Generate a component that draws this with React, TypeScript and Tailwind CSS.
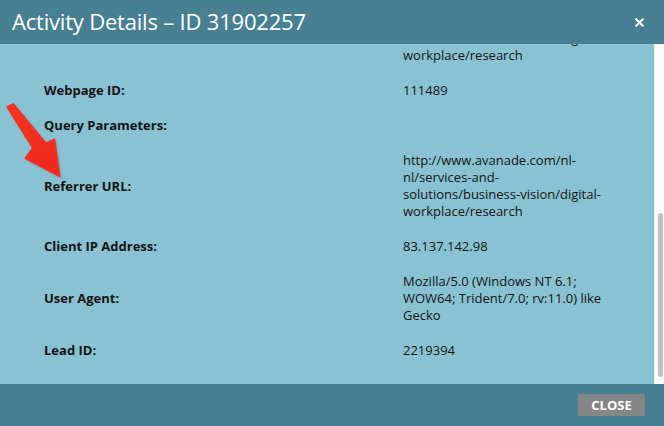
import { X } from "lucide-react";

interface Field {
  label: string;
  lines: string[];
}

const referrer = [
  "http://www.avanade.com/nl-",
  "nl/services-and-",
  "solutions/business-vision/digital-",
  "workplace/research",
];

const fields: Field[] = [
  { label: "Webpage URL:", lines: referrer },
  { label: "Webpage ID:", lines: ["111489"] },
  { label: "Query Parameters:", lines: [] },
  { label: "Referrer URL:", lines: referrer },
  { label: "Client IP Address:", lines: ["83.137.142.98"] },
  {
    label: "User Agent:",
    lines: ["Mozilla/5.0 (Windows NT 6.1;", "WOW64; Trident/7.0; rv:11.0) like", "Gecko"],
  },
  { label: "Lead ID:", lines: ["2219394"] },
];

function Arrow() {
  return (
    <svg
      className="absolute left-0 top-0 pointer-events-none"
      width="70"
      height="190"
      viewBox="0 0 70 190"
      style={{ filter: "drop-shadow(1px 1px 1px rgba(0,0,0,0.18))" }}
    >
      <defs>
        <linearGradient id="arrowFill" x1="0" y1="0" x2="0.4" y2="1">
          <stop offset="0" stopColor="#f7351f" />
          <stop offset="1" stopColor="#ee2a1c" />
        </linearGradient>
      </defs>
      <polygon
        points="7.2,63 13.3,60 46,99.2 54.5,95.3 59.8,132.5 25.2,114.3 32.8,104"
        fill="url(#arrowFill)"
        strokeLinejoin="round"
        stroke="#f5301f"
        strokeWidth="1.5"
      />
    </svg>
  );
}

export default function App() {
  return (
    <div
      className="w-[664px] h-[426px] flex flex-col bg-[#478093] overflow-hidden"
      style={{ fontFamily: "'Open Sans', 'Liberation Sans', sans-serif" }}
    >
      {/* Header */}
      <div className="h-[44px] shrink-0 flex items-center justify-between pl-[12px] pr-[18px] bg-[#478093]">
        <h1 className="text-white text-[22px] leading-[30px] -mt-[2px] tracking-[-0.2px]">
          Activity Details – ID 31902257
        </h1>
        <X size={13} strokeWidth={4} className="text-white" />
      </div>

      {/* Body */}
      <div className="flex-1 flex min-h-0 bg-[#89c2d2]">
        <div className="relative flex-1 overflow-hidden">
          <div className="-mt-[57px] pl-[44px] text-[13px] leading-[17px] text-[#141414]">
            {fields.map((f) => (
              <div key={f.label} className="grid grid-cols-[359px_1fr] items-center py-[9px] min-h-[35px]">
                <div className="font-bold">{f.label}</div>
                <div>
                  {f.lines.map((l) => (
                    <div key={l} className="whitespace-nowrap">
                      {l}
                    </div>
                  ))}
                </div>
              </div>
            ))}
          </div>
          <Arrow />
        </div>
        {/* Scrollbar */}
        <div className="w-[10px] shrink-0 bg-[#fafafa] border-l border-[#ececec] flex flex-col pb-[7px]">
          <div className="mt-[169px] ml-[3px] w-[5px] flex-1 rounded-full bg-[#c1c1c1]" />
        </div>
      </div>

      {/* Footer */}
      <div className="h-[42px] shrink-0 flex items-center justify-end pr-[19px] bg-[#478093]">
        <button className="w-[67px] h-[22px] bg-[#868686] text-white text-[13px] font-bold leading-none">
          CLOSE
        </button>
      </div>
    </div>
  );
}
